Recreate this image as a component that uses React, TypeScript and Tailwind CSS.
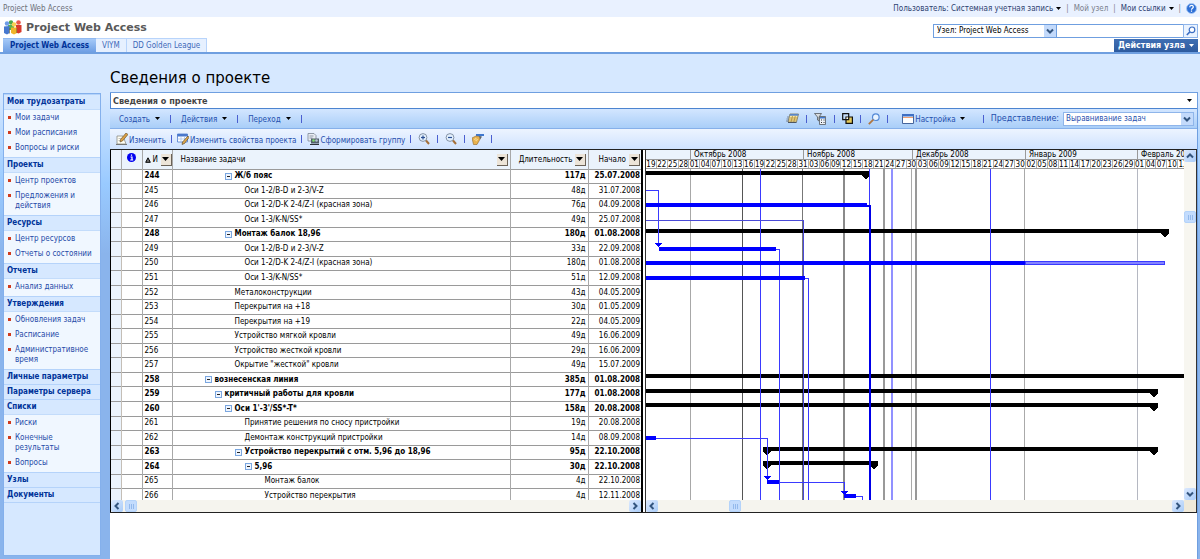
import type { ReactNode } from "react";

type Task = {
  id: number;
  name: string;
  level: number;
  duration: string;
  start: string;
  summary?: boolean;
};

const tasks: Task[] = [
  { id: 244, name: "Ж/б пояс", level: 3, duration: "117д", start: "25.07.2008", summary: true },
  { id: 245, name: "Оси 1-2/B-D и 2-3/V-Z", level: 4, duration: "48д", start: "31.07.2008" },
  { id: 246, name: "Оси 1-2/D-K 2-4/Z-I (красная зона)", level: 4, duration: "76д", start: "04.09.2008" },
  { id: 247, name: "Оси 1-3/K-N/SS*", level: 4, duration: "49д", start: "25.07.2008" },
  { id: 248, name: "Монтаж балок 18,96", level: 3, duration: "180д", start: "01.08.2008", summary: true },
  { id: 249, name: "Оси 1-2/B-D и 2-3/V-Z", level: 4, duration: "33д", start: "22.09.2008" },
  { id: 250, name: "Оси 1-2/D-K 2-4/Z-I (красная зона)", level: 4, duration: "180д", start: "01.08.2008" },
  { id: 251, name: "Оси 1-3/K-N/SS*", level: 4, duration: "51д", start: "12.09.2008" },
  { id: 252, name: "Металоконструкции", level: 3, duration: "43д", start: "04.05.2009" },
  { id: 253, name: "Перекрытия на +18", level: 3, duration: "30д", start: "01.05.2009" },
  { id: 254, name: "Перекрытия на +19", level: 3, duration: "22д", start: "04.05.2009" },
  { id: 255, name: "Устройство мягкой кровли", level: 3, duration: "49д", start: "16.06.2009" },
  { id: 256, name: "Устройство жесткой кровли", level: 3, duration: "29д", start: "16.06.2009" },
  { id: 257, name: 'Окрытие "жесткой" кровли', level: 3, duration: "49д", start: "15.07.2009" },
  { id: 258, name: "вознесенская линия", level: 1, duration: "385д", start: "01.08.2008", summary: true },
  { id: 259, name: "критичный работы для кровли", level: 2, duration: "177д", start: "01.08.2008", summary: true },
  { id: 260, name: "Оси 1'-3'/SS*-T*", level: 3, duration: "158д", start: "20.08.2008", summary: true },
  { id: 261, name: "Принятие решения по сносу пристройки", level: 4, duration: "19д", start: "20.08.2008" },
  { id: 262, name: "Демонтаж конструкций пристройки", level: 4, duration: "14д", start: "08.09.2008" },
  { id: 263, name: "Устройство перекрытий с отм. 5,96 до 18,96", level: 4, duration: "95д", start: "22.10.2008", summary: true },
  { id: 264, name: "5,96", level: 5, duration: "30д", start: "22.10.2008", summary: true },
  { id: 265, name: "Монтаж балок", level: 6, duration: "4д", start: "22.10.2008" },
  { id: 266, name: "Устройство перекрытия", level: 6, duration: "4д", start: "12.11.2008" },
];

const indents: Record<number, string> = {
  1: "pl-[32px]",
  2: "pl-[42px]",
  3: "pl-[52px]",
  4: "pl-[62px]",
  5: "pl-[72px]",
  6: "pl-[82px]",
};

const sections = [
  { title: "Мои трудозатраты", items: ["Мои задачи", "Мои расписания", "Вопросы и риски"] },
  { title: "Проекты", items: ["Центр проектов", "Предложения и действия"] },
  { title: "Ресурсы", items: ["Центр ресурсов", "Отчеты о состоянии"] },
  { title: "Отчеты", items: ["Анализ данных"] },
  { title: "Утверждения", items: ["Обновления задач", "Расписание", "Административное время"] },
  { title: "Личные параметры", items: [] },
  { title: "Параметры сервера", items: [] },
  { title: "Списки", items: ["Риски", "Конечные результаты", "Вопросы"] },
  { title: "Узлы", items: [] },
  { title: "Документы", items: [] },
];

const months = ["", "Октябрь 2008", "Ноябрь 2008", "Декабрь 2008", "Январь 2009", "Февраль 2009"];

const days =
  "19 22 25 28 01 04 07 10 13 16 19 22 25 28 31 03 06 09 12 15 18 21 24 27 30 03 06 09 12 15 18 21 24 27 30 02 05 08 11 14 17 20 23 26 29 01 04 07 10 13".split(
    " "
  );

function Caret({ className = "text-black" }: { className?: string }) {
  return (
    <svg width="5" height="3" viewBox="0 0 5 3" className={`shrink-0 ${className}`} aria-hidden="true">
      <path d="M0 0h5L2.5 3z" fill="currentColor" />
    </svg>
  );
}

function Bar() {
  return <span className="h-[8px] w-px shrink-0 bg-[#4a5fd0]" />;
}

function Arrow({ dir }: { dir: "left" | "right" | "up" | "down" }) {
  const paths = {
    left: "M7.5 3 4.5 6l3 3",
    right: "M4.5 3l3 3-3 3",
    up: "M3 7.5l3-3 3 3",
    down: "M3 4.5l3 3 3-3",
  };
  return (
    <svg width="12" height="12" viewBox="0 0 12 12" aria-hidden="true">
      <path d={paths[dir]} fill="none" stroke="#33557f" strokeWidth="2" />
    </svg>
  );
}

function ScrollButton({ dir, label }: { dir: "left" | "right" | "up" | "down"; label: string }) {
  return (
    <button
      aria-label={label}
      className="flex h-[12px] w-[12px] shrink-0 items-center justify-center rounded-[2px] bg-gradient-to-br from-[#dce9fe] to-[#a9ccf8]"
    >
      <Arrow dir={dir} />
    </button>
  );
}

function Thumb() {
  return (
    <span className="flex h-[12px] w-[12px] shrink-0 items-center justify-center gap-px rounded-[2px] border border-[#b4d3fa] bg-[#c3dcfd]">
      <span className="h-[5px] w-px bg-[#93b9ec]" />
      <span className="h-[5px] w-px bg-[#93b9ec]" />
      <span className="h-[5px] w-px bg-[#93b9ec]" />
    </span>
  );
}

function FilterButton({ label }: { label: string }) {
  return (
    <button
      aria-label={label}
      className="flex h-[12px] w-[11px] shrink-0 items-center justify-center border-r border-b border-[#6b6257] bg-[#ece4d8]"
    >
      <svg width="7" height="4" viewBox="0 0 7 4" aria-hidden="true">
        <path d="M0 0h7L3.5 4z" fill="#000" />
      </svg>
    </button>
  );
}

function LogoIcon() {
  return (
    <svg width="18" height="15" viewBox="0 0 18 15" className="shrink-0" aria-hidden="true">
      <circle cx="7" cy="2.5" r="2.2" fill="#4ca64a" />
      <path d="M4 5h6v5H4z" fill="#58b04d" />
      <circle cx="14.500" cy="2.500" r="2.300" fill="#e9584a" />
      <path d="M12 5h5.500v7l-3 1.500-2.500-1z" fill="#d8392b" />
      <circle cx="3" cy="3.500" r="2.200" fill="#6d9be6" />
      <path d="M0 6.500 5.500 6v7L3 14.500 0 13z" fill="#4678cf" />
      <circle cx="10" cy="4.500" r="2.300" fill="#f8cf52" />
      <path d="M7 7.500h6V13l-3 1.500L7 13z" fill="#f0b429" />
      <path d="M5.500 8v5.500M12.500 8v5" stroke="#7a6a30" strokeWidth=".6" />
    </svg>
  );
}

function EditIcon() {
  return (
    <svg width="12" height="12" viewBox="0 0 12 12" className="shrink-0" aria-hidden="true">
      <path d="M1 3h6l3 8H1z" fill="#fffdf3" stroke="#8c8c84" strokeWidth=".8" />
      <path d="M0 11.500h11" stroke="#777" />
      <path d="M2.500 5.500h3M2.500 7.500h3" stroke="#aaa" strokeWidth=".7" />
      <path d="M10 0l2 1.500L6.500 8 4 9l.5-2.500z" fill="#d99e45" stroke="#5c4a2a" strokeWidth=".6" />
    </svg>
  );
}

function PropertiesIcon() {
  return (
    <svg width="12" height="12" viewBox="0 0 12 12" className="shrink-0" aria-hidden="true">
      <path d="M.5 1h10v8H.500z" fill="#fff" stroke="#4a78cc" strokeWidth=".8" />
      <path d="M.5 1h10v2.500H.500z" fill="#4a78cc" />
      <path d="M.5 6h10M4 3.500V9M7.500 3.500V9" stroke="#9dbbe8" strokeWidth=".7" />
      <path d="M11 3l1 1.500L7.500 10.500l-2.500 1 .5-2.500z" fill="#e0a94d" stroke="#4a3b22" strokeWidth=".6" />
    </svg>
  );
}

function TeamIcon() {
  return (
    <svg width="12" height="12" viewBox="0 0 12 12" className="shrink-0" aria-hidden="true">
      <path d="M1 .5h6l2 2V8H1z" fill="#e9edf3" stroke="#7b8794" strokeWidth=".8" />
      <path d="M2.500 3h4M2.500 5h3" stroke="#6b7788" strokeWidth=".7" />
      <path d="M4 5.500h8v5H4z" fill="#525f6b" />
      <circle cx="6.500" cy="7.500" r="1.300" fill="#7ddb6a" />
      <circle cx="9.500" cy="7.500" r="1.300" fill="#b5c2d3" />
      <path d="M3 11.500h9" stroke="#2c333b" />
    </svg>
  );
}

function ZoomIcon({ minus }: { minus?: boolean }) {
  return (
    <svg width="12" height="12" viewBox="0 0 12 12" className="shrink-0" aria-hidden="true">
      <circle cx="5" cy="4.500" r="3.900" fill="#e3f0fd" stroke="#8593a6" />
      <path d="M3 4.500h4" stroke="#2b4f94" strokeWidth="1.200" />
      {!minus && <path d="M5 2.500v4" stroke="#2b4f94" strokeWidth="1.200" />}
      <path d="M8 7.500l3 3.500" stroke="#a5703a" strokeWidth="2" />
    </svg>
  );
}

function GoToIcon() {
  return (
    <svg width="12" height="12" viewBox="0 0 12 12" className="shrink-0" aria-hidden="true">
      <path d="M4 1h8v2H4z" fill="#3f78cf" />
      <path d="M0 5l4-2 5 1-2 4-2 3.500H1.500z" fill="#e8b24e" stroke="#916426" strokeWidth=".6" />
      <path d="M7 3l3 .5-2 3z" fill="#5d6670" />
      <path d="M2 6l3 2M3 5l3 2" stroke="#fbe2a3" strokeWidth=".8" />
    </svg>
  );
}

function SheetIcon() {
  return (
    <svg width="13" height="11" viewBox="0 0 13 11" className="shrink-0" aria-hidden="true">
      <path d="M4 1h8.500L10.500 9H2z" fill="#fbe9a6" stroke="#6f6745" strokeWidth=".7" />
      <path d="M4 1h8.500l-.4 1.800H3.500z" fill="#5a86c8" />
      <path d="M3.500 5h8M2.800 7h8.200M6.500 3 5 9M9.300 3 7.800 9" stroke="#a5822c" strokeWidth=".7" />
      <path d="M2 9.500h8.500" stroke="#4d5560" />
      <path d="M0 8h3M.5 6H3M1 4h2" stroke="#6b7788" strokeWidth=".8" />
    </svg>
  );
}

function FilterIcon() {
  return (
    <svg width="13" height="12" viewBox="0 0 13 12" className="shrink-0" aria-hidden="true">
      <path d="M.5.500h7L5 4v4L3.500 7V4z" fill="#d9dcdf" stroke="#52585e" strokeWidth=".8" />
      <path d="M5.500 3.500h6v8h-6z" fill="#eef2f7" stroke="#52585e" strokeWidth=".8" />
      <path d="M6 4h5v1.500H6z" fill="#3f78cf" />
      <path d="M7 7h1M9.500 7h1M7 9.500h1M9.500 9.500h1" stroke="#333" />
    </svg>
  );
}

function CopyIcon() {
  return (
    <svg width="11" height="11" viewBox="0 0 11 11" className="shrink-0" aria-hidden="true">
      <path d="M4 4h6.400v6.400H4z" fill="#e6cb5a" stroke="#111" strokeWidth="1.200" />
      <path d="M4.500 4.500h2.200v2.200H4.500z" fill="#fff" />
      <path d="M.7.700h6v6h-6z" fill="none" stroke="#111" strokeWidth="1.200" />
    </svg>
  );
}

function SearchIcon() {
  return (
    <svg width="12" height="12" viewBox="0 0 12 12" className="shrink-0" aria-hidden="true">
      <circle cx="7.800" cy="4.200" r="3.300" fill="#e9f4ff" stroke="#5489d6" strokeWidth="1.200" />
      <path d="M5.300 6.700.8 11.200" stroke="#b0763f" strokeWidth="1.800" />
    </svg>
  );
}

function WindowIcon() {
  return (
    <svg width="12" height="10" viewBox="0 0 12 10" className="shrink-0" aria-hidden="true">
      <path d="M.5.500h11v9H.500z" fill="#fff" stroke="#46659c" />
      <path d="M0 0h12v2.500H0z" fill="#3f70c4" />
      <path d="M1 3.500h10" stroke="#f0a070" />
    </svg>
  );
}

function Summary({ x1, x2, y, from, to }: { x1: number; x2: number; y: number; from?: boolean; to?: boolean }) {
  return (
    <g fill="#000">
      <rect x={x1} y={y} width={x2 - x1} height="4" />
      {from && <path d={`M${x1} ${y + 3}h8v2l-4 3-4-3z`} />}
      {to && <path d={`M${x2} ${y + 3}h-8v2l4 3 4-3z`} />}
    </g>
  );
}

function Chart() {
  const grey = [
    [44, "#a8a8a8", 1],
    [96, "#555", 1],
    [156, "#777", 1],
    [197, "#8a8a8a", 2],
    [237, "#999", 2],
    [265, "#aaa", 1],
    [269, "#999", 2],
    [378, "#aaa", 1],
    [491, "#b5b8c2", 1],
  ] as const;
  return (
    <svg width="539" height="331" viewBox="0 0 539 331" className="block" shapeRendering="crispEdges" aria-hidden="true">
      {grey.map(([x, color, w]) => (
        <rect key={x} x={x} y="0" width={w} height="331" fill={color} />
      ))}
      <rect x="245" y="0" width="2" height="331" fill="#9191ff" />
      <Summary x1={0} x2={224} y={2} to />
      <Summary x1={0} x2={523} y={60} to />
      <Summary x1={0} x2={539} y={205} />
      <Summary x1={0} x2={512} y={220} to />
      <Summary x1={0} x2={512} y={234} to />
      <Summary x1={117} x2={512} y={278} from to />
      <Summary x1={117} x2={232} y={292} from to />

      {/* task links */}
      <g fill="none" stroke="#3a3aff">
        <path d="M114.500 0V331" />
        <path d="M344.500 0V331" />
        <path d="M223.500 0V331" />
        <path d="M0 21.500H12.500V76" />
        <path d="M0 51.500H157.500V331" stroke="#4a4ad8" />
        <path d="M130 80.500H133.500V331" />
        <path d="M159 109.500H162.500V331" />
        <path d="M10 269.500H121.500V308" />
        <path d="M133 313.500H198.500V324" />
        <path d="M210 327.500H216.500V331" />
        <path d="M221 36.500H224V331" stroke="#0000e8" strokeWidth="2" />
      </g>
      <g fill="#0000ff">
        <path d="M9 74h7l-3.500 4z" />
        <path d="M118 307h7l-3.500 4z" />
        <path d="M195 322h7l-3.500 4z" />
        <rect x="0" y="34" width="221" height="4" />
        <rect x="13" y="78" width="117" height="4" />
        <rect x="0" y="92" width="379" height="4" />
        <rect x="0" y="107" width="159" height="4" />
        <rect x="0" y="267" width="10" height="4" />
        <rect x="121" y="311" width="12" height="4" />
        <rect x="198" y="325" width="12" height="4" />
      </g>
      <rect x="379.500" y="92.500" width="139" height="3" fill="#8484ff" stroke="#3a3aff" />
    </svg>
  );
}

function MenuButton({ children }: { children: ReactNode }) {
  return (
    <button className="flex shrink-0 items-center gap-[5px] whitespace-nowrap text-[#1f4fae]">
      <span className="pt-[3px]">{children}</span>
      <Caret />
    </button>
  );
}

function ToolButton({ icon, children }: { icon: ReactNode; children: ReactNode }) {
  return (
    <button className="flex shrink-0 items-center gap-px whitespace-nowrap text-[#1f4fae]">
      {icon}
      <span className="pt-[3px]">{children}</span>
    </button>
  );
}

function TopBar() {
  return (
    <div className="flex h-[17px] items-center justify-between bg-[#e9f1ff] pr-[3px] pl-[3px] text-[#2d3f70]">
      <a href="#" className="text-[#6d7078]">
        Project Web Access
      </a>
      <div className="flex items-center gap-[5px]">
        <button className="flex items-center gap-[3px]">
          Пользователь: Системная учетная запись <Caret />
        </button>
        <span className="text-[#7a7f8c]">|</span>
        <a href="#" className="text-[#7a7f8c]">
          Мой узел
        </a>
        <span className="text-[#7a7f8c]">|</span>
        <button className="flex items-center gap-[3px]">
          Мои ссылки <Caret />
        </button>
        <span className="text-[#7a7f8c]">|</span>
        <button aria-label="Справка">
          <svg width="11" height="11" viewBox="0 0 11 11" aria-hidden="true">
            <circle cx="5.500" cy="5.500" r="5" fill="#2d6fd6" stroke="#a9c9f5" />
            <path d="M3.700 4.300c0-2.600 3.600-2.400 3.600-.3 0 1.300-1.800 1.200-1.800 2.700M5.500 7.500v1.300" fill="none" stroke="#fff" strokeWidth="1.200" />
          </svg>
        </button>
      </div>
    </div>
  );
}

function Header() {
  return (
    <header className="flex h-[35px] justify-between bg-white">
      <div className="flex flex-col justify-between">
        <div className="flex h-[21px] items-center gap-[4px] pl-[4px]">
          <LogoIcon />
          <h1 className="font-['DejaVu_Sans'] text-[11px] font-bold text-[#595959]">Project Web Access</h1>
        </div>
        <nav className="flex h-[14px] items-stretch pl-[3px] text-[#3c69b8]">
          <a
            href="#"
            className="flex items-center border-t border-[#8fb8f0] bg-gradient-to-b from-[#a5c9f8] to-[#6f9fe4] px-[7px] font-bold text-[#003399]"
          >
            Project Web Access
          </a>
          <a href="#" className="flex items-center border-t border-r border-[#b8d4fb] bg-[#e6f0ff] px-[6px]">
            VIYM
          </a>
          <a href="#" className="flex items-center border-t border-r border-[#b8d4fb] bg-[#e6f0ff] px-[6px]">
            DD Golden League
          </a>
        </nav>
      </div>
      <div className="flex flex-col items-end justify-between pt-[7px] pr-[2px]">
        <form className="flex h-[14px]">
          <div className="relative w-[124px] border border-[#6f9fe0]">
            <select aria-label="Узел" className="block h-full w-full appearance-none bg-white pl-[3px] text-black">
              <option>Узел: Project Web Access</option>
            </select>
            <span className="pointer-events-none absolute top-0 right-0 bg-[#c3dafb]">
              <Arrow dir="down" />
            </span>
          </div>
          <input aria-label="Поиск" className="w-[126px] border-y border-[#6f9fe0] bg-white px-1" />
          <button type="button" aria-label="Найти" className="flex w-[15px] items-center justify-center border border-[#8fb5ea] bg-[#eaf3ff]">
            <svg width="10" height="10" viewBox="0 0 10 10" aria-hidden="true">
              <circle cx="6" cy="3.800" r="2.800" fill="#fff" stroke="#3c6fc4" strokeWidth="1.200" />
              <path d="M3.900 5.900.8 9" stroke="#3c6fc4" strokeWidth="1.600" />
            </svg>
          </button>
        </form>
        <button className="flex h-[13px] w-[84px] items-center justify-center gap-[4px] bg-gradient-to-b from-[#3f6fb4] to-[#2d5a9e] font-['DejaVu_Sans'] font-bold text-white">
          Действия узла <Caret className="text-white" />
        </button>
      </div>
    </header>
  );
}

function Sidebar() {
  return (
    <nav className="mt-[39px] mb-[3px] ml-[3px] w-[98px] shrink-0 border border-[#84b0ec] bg-[#d6e8ff] text-[#1f4aa8]">
      {sections.map((section) => (
        <div key={section.title}>
          <h2 className="h-[15px] border-t border-[#b5d3fa] pl-[3px] leading-[14px] font-bold whitespace-nowrap text-[#003399]">
            {section.title}
          </h2>
          {section.items.length > 0 && (
            <ul className="border-t border-[#c3dcfb] bg-[#f0f7ff] pb-[2px]">
              {section.items.map((item) => (
                <li key={item} className="flex gap-[4px] pt-[3px] pr-[4px] pb-[2px] pl-[4px] leading-[10px]">
                  <span className="mt-[3px] h-[3px] w-[3px] shrink-0 bg-[#d03a1c]" />
                  <a href="#" className="min-w-0">
                    {item}
                  </a>
                </li>
              ))}
            </ul>
          )}
        </div>
      ))}
      <div className="border-t border-[#b5d3fa]" />
    </nav>
  );
}

function Toolbars() {
  return (
    <>
      <div className="flex h-[20px] items-center justify-between border-b border-[#86b0ea] bg-gradient-to-b from-[#d3e6ff] to-[#a9cef8] pr-[3px] pl-[9px]">
        <div className="flex items-center gap-[10px]">
          <MenuButton>Создать</MenuButton>
          <Bar />
          <MenuButton>Действия</MenuButton>
          <Bar />
          <MenuButton>Переход</MenuButton>
          <Bar />
        </div>
        <div className="flex items-center gap-[7px]">
          <button aria-label="Таблица">
            <SheetIcon />
          </button>
          <Bar />
          <button aria-label="Фильтр">
            <FilterIcon />
          </button>
          <Bar />
          <button aria-label="Группировка">
            <CopyIcon />
          </button>
          <Bar />
          <button aria-label="Поиск задачи">
            <SearchIcon />
          </button>
          <Bar />
          <button className="ml-[7px] flex items-center gap-px text-[#1f4fae]">
            <WindowIcon />
            <span className="pt-[3px] pr-[3px]">Настройка</span>
            <Caret />
          </button>
          <span className="w-[4px]" />
          <Bar />
          <div className="flex items-center gap-[4px]">
            <label htmlFor="view" className="font-['DejaVu_Sans'] text-[#1f4fae]">
              Представление:
            </label>
            <div className="relative h-[14px] w-[131px] border border-[#8fb5ea]">
              <select id="view" className="block h-full w-full appearance-none bg-white pl-[2px] text-[#1f4fae]">
                <option>Выравнивание задач</option>
              </select>
              <span className="pointer-events-none absolute top-0 right-0 bg-[#c3dafb]">
                <Arrow dir="down" />
              </span>
            </div>
          </div>
        </div>
      </div>
      <div className="flex h-[20px] items-center gap-[7px] bg-gradient-to-b from-[#edf4ff] to-[#cfe2ff] pl-[6px]">
        <div className="flex items-center gap-[5px]">
          <ToolButton icon={<EditIcon />}>Изменить</ToolButton>
          <Bar />
          <ToolButton icon={<PropertiesIcon />}>Изменить свойства проекта</ToolButton>
          <Bar />
          <ToolButton icon={<TeamIcon />}>Сформировать группу</ToolButton>
          <Bar />
        </div>
        <button aria-label="Увеличить">
          <ZoomIcon />
        </button>
        <Bar />
        <button aria-label="Уменьшить">
          <ZoomIcon minus />
        </button>
        <Bar />
        <button aria-label="Перейти к задаче">
          <GoToIcon />
        </button>
        <Bar />
      </div>
    </>
  );
}

function TaskTable() {
  return (
    <div className="flex w-[533px] shrink-0 flex-col border-r-2 border-l border-black">
      <div className="h-[350px] overflow-hidden">
        <table className="h-[354px] w-full table-fixed border-collapse">
          <colgroup>
            <col className="w-[10px]" />
            <col className="w-[21px]" />
            <col className="w-[30px]" />
            <col />
            <col className="w-[78px]" />
            <col className="w-[53px]" />
          </colgroup>
          <thead>
            <tr className="h-[19px] border-b border-[#9a9a9a] bg-[#ebf3fc]">
              <th className="border-r border-[#a8a8a8]" />
              <th className="border-r border-[#a8a8a8] pb-[4px]">
                <svg width="9" height="9" viewBox="0 0 9 9" className="mx-auto block" aria-label="Индикаторы">
                  <circle cx="4.500" cy="4.500" r="4.500" fill="#0000f0" />
                  <path d="M4.500 1.500v1.200M3.500 4h1.500v3M3.200 7h3" fill="none" stroke="#fff" strokeWidth="1.200" />
                </svg>
              </th>
              <th className="border-r border-[#a8a8a8] font-normal">
                <div className="flex items-center justify-between pt-[1px] pl-[2px]">
                  <span className="flex items-center gap-[2px]">
                    <svg width="6" height="6" viewBox="0 0 6 6" aria-hidden="true">
                      <path d="M3 .800 5.300 5.300H.7z" fill="#777" stroke="#000" />
                    </svg>
                    И
                  </span>
                  <FilterButton label="Фильтр: идентификатор" />
                </div>
              </th>
              <th className="border-r border-[#a8a8a8] font-normal">
                <div className="flex items-center justify-between pt-[1px] pr-[2px] pl-[8px]">
                  Название задачи <FilterButton label="Фильтр: название задачи" />
                </div>
              </th>
              <th className="border-r border-[#a8a8a8] font-normal">
                <div className="flex items-center justify-end gap-[2px] pt-[1px] pr-[2px]">
                  Длительность <FilterButton label="Фильтр: длительность" />
                </div>
              </th>
              <th className="font-normal">
                <div className="flex items-center justify-end gap-[3px] pt-[1px] pr-[1px]">
                  Начало <FilterButton label="Фильтр: начало" />
                </div>
              </th>
            </tr>
          </thead>
          <tbody>
            {tasks.map((task) => (
              <tr key={task.id} className={task.summary ? "border-b border-[#9a9a9a] font-bold" : "border-b border-[#9a9a9a]"}>
                <td className="border-r border-[#c4beb6] bg-[#ebf3fc]" />
                <td className="border-r border-[#a8a8a8]" />
                <td className="border-r border-[#a8a8a8] pl-[2px]">{task.id}</td>
                <td className="border-r border-[#a8a8a8]">
                  <div className={`flex items-center gap-[3px] whitespace-nowrap ${indents[task.level]}`}>
                    {task.summary ? (
                      <button aria-label="Свернуть" className="flex h-[7px] w-[7px] items-center justify-center border border-[#7ba7e0] bg-[#eef5ff]">
                        <span className="h-px w-[3px] bg-[#222]" />
                      </button>
                    ) : (
                      <span className="w-[7px]" />
                    )}
                    {task.name}
                  </div>
                </td>
                <td className="border-r border-[#a8a8a8] pr-[2px] text-right">{task.duration}</td>
                <td className="pr-[1px] text-right">{task.start}</td>
              </tr>
            ))}
          </tbody>
        </table>
      </div>
      <div className="flex h-[12px] justify-between bg-[#f5f4ee]">
        <div className="flex gap-[2px]">
          <ScrollButton dir="left" label="Прокрутить влево" />
          <Thumb />
        </div>
        <ScrollButton dir="right" label="Прокрутить вправо" />
      </div>
    </div>
  );
}

function GanttPane() {
  return (
    <div className="ml-[2px] flex min-w-0 flex-1 border-r border-l border-[#333]">
      <div className="flex min-w-0 flex-1 flex-col">
        <div className="h-[19px] overflow-hidden border-b border-[#9a9a9a]">
          <div className="grid h-[9px] w-[543px] grid-cols-[44px_113px_109px_113px_112px_1fr] bg-[#ebf3fc] leading-[9px]">
            {months.map((month, i) => (
              <span key={i} className={i ? "overflow-hidden border-l border-[#9a9a9a] pl-[3px] whitespace-nowrap" : ""}>
                {month}
              </span>
            ))}
          </div>
          <div className="grid h-[9px] w-[543px] grid-cols-[repeat(50,1fr)] border-t border-[#9a9a9a] text-center leading-[9px]">
            {days.map((day, i) => (
              <span key={i} className="min-w-0 border-r border-[#b0b0b0]">
                {day}
              </span>
            ))}
          </div>
        </div>
        <div className="h-[331px] overflow-hidden bg-white">
          <Chart />
        </div>
        <div className="flex h-[12px] justify-between bg-[#f5f4ee]">
          <div className="flex">
            <ScrollButton dir="left" label="Прокрутить влево" />
            <span className="w-[71px]" />
            <Thumb />
          </div>
          <ScrollButton dir="right" label="Прокрутить вправо" />
        </div>
      </div>
      <div className="flex w-[12px] shrink-0 flex-col justify-between bg-[#f7f6f0]">
        <div className="flex flex-col">
          <ScrollButton dir="up" label="Прокрутить вверх" />
          <span className="h-[49px]" />
          <Thumb />
        </div>
        <div className="flex flex-col">
          <ScrollButton dir="down" label="Прокрутить вниз" />
          <span className="h-[12px] bg-[#efe9d9]" />
        </div>
      </div>
    </div>
  );
}

export default function App() {
  return (
    <div className="flex min-h-screen flex-col font-['DejaVu_Sans_Condensed','DejaVu_Sans',sans-serif] text-[8px] leading-[10px] text-black">
      <TopBar />
      <Header />
      <div className="flex flex-1 border-t-2 border-[#6f9fe0] bg-[linear-gradient(#d6e8ff_0px,#d6e8ff_40px,#99caff_130px,#8ab4ec_200px)]">
        <Sidebar />
        <main className="mr-[2px] ml-[9px] flex min-w-0 flex-1 flex-col">
          <h2 className="h-[38px] pt-[14px] font-['DejaVu_Sans'] text-[15px] leading-[20px]">Сведения о проекте</h2>
          <section className="flex flex-1 flex-col border-t border-r border-[#6f9fe0] bg-white">
            <div className="flex h-[16px] items-center justify-between border-b border-l border-[#4c84d0] pr-[5px] pl-[2px]">
              <h3 className="text-[9px] font-bold text-[#444]">Сведения о проекте</h3>
              <button aria-label="Меню">
                <Caret />
              </button>
            </div>
            <Toolbars />
            <div className="flex border-t border-b border-[#222]">
              <TaskTable />
              <GanttPane />
            </div>
          </section>
        </main>
      </div>
    </div>
  );
}
